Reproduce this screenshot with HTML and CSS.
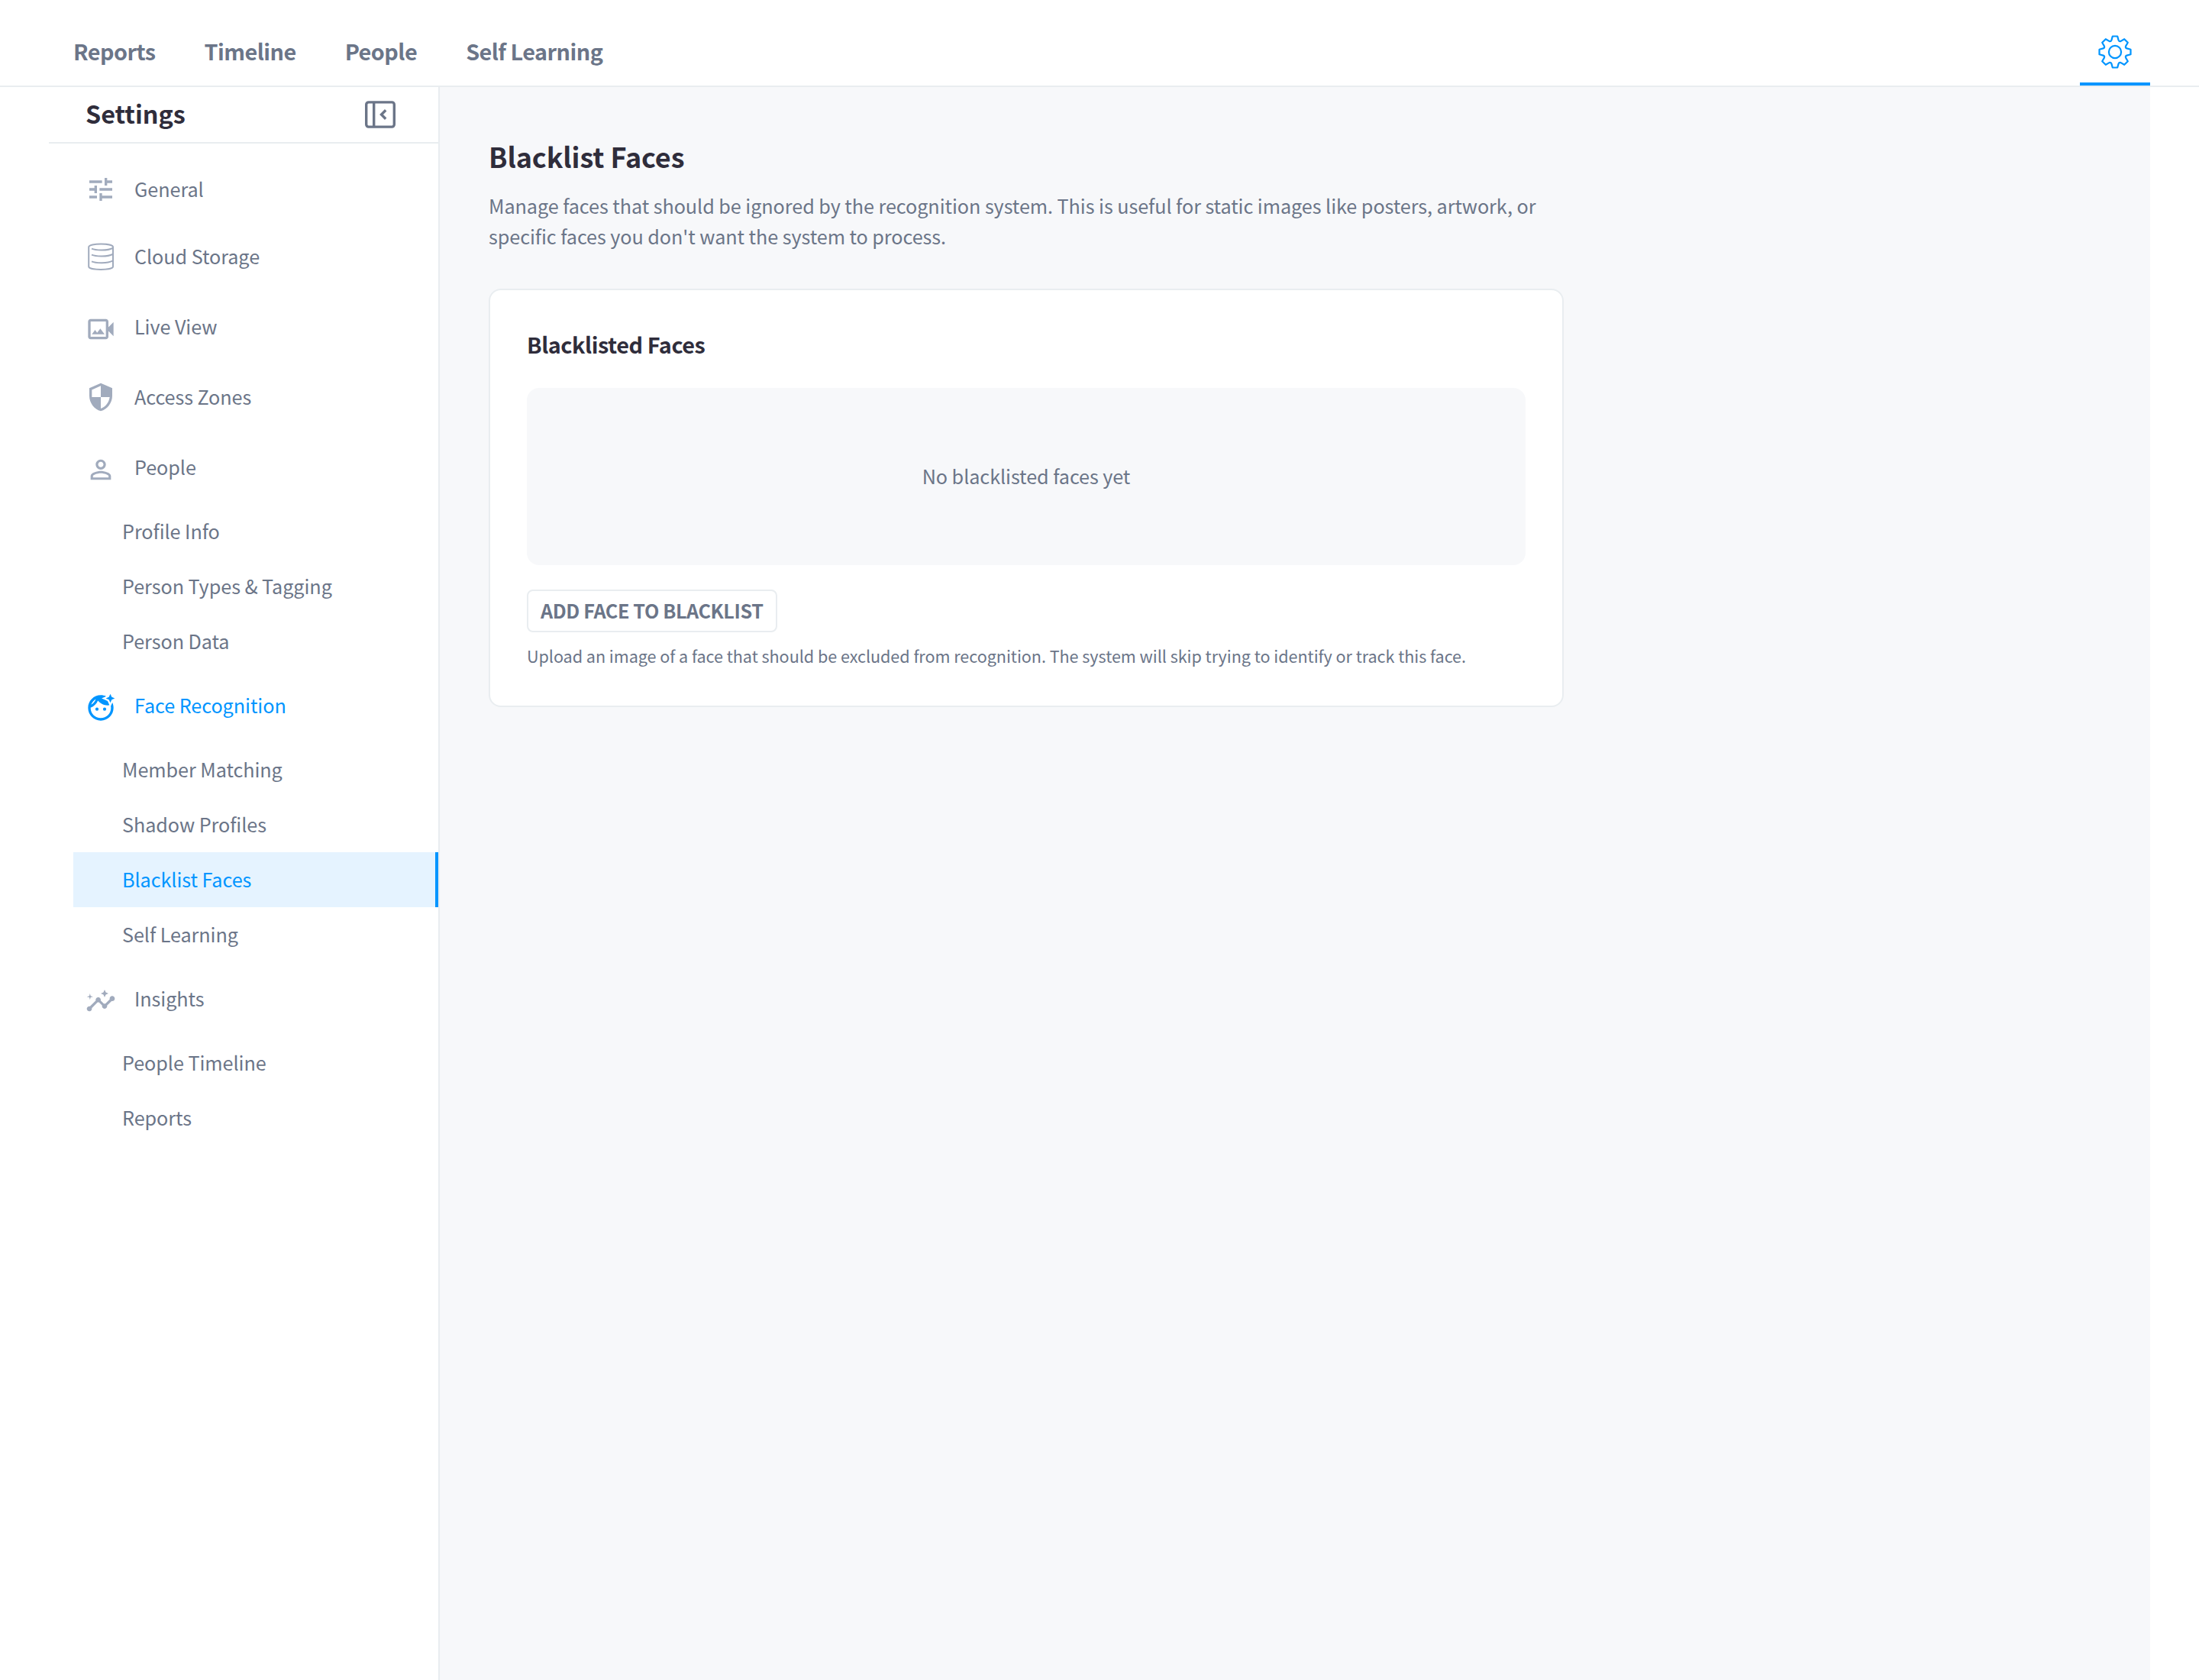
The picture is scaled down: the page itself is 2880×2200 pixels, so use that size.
FILE: index.html
```html
<!DOCTYPE html>
<html lang="en">
<head>
    <meta charset="UTF-8">
    <meta name="viewport" content="width=device-width, initial-scale=1.0">
    <title>Blacklist Faces</title>
    <link rel="stylesheet" href="styles.css">
</head>
<body>
    <header class="topbar">
        <nav class="topnav">
            <a href="#">Reports</a>
            <a href="#">Timeline</a>
            <a href="#">People</a>
            <a href="#">Self Learning</a>
        </nav>
        <a href="#" class="gear on">
            <svg width="48" height="48" viewBox="0 0 48 48" fill="none" stroke="currentColor" stroke-width="2.2" stroke-linejoin="round">
                <circle cx="24" cy="24" r="8.1"/>
                <path d="M20.8 3.5H27.2L28.6 8.600Q29.500 10.700 31.600 9.900L36.200 7.200 40.800 11.800 38.100 16.400Q37.300 18.500 39.400 19.400L44.500 20.800V27.200L39.400 28.600Q37.300 29.500 38.100 31.600L40.800 36.200 36.200 40.800 31.600 38.100Q29.500 37.300 28.600 39.400L27.200 44.500H20.800L19.400 39.400Q18.500 37.300 16.400 38.100L11.800 40.800 7.200 36.200 9.900 31.600Q10.700 29.500 8.600 28.600L3.500 27.200V20.800L8.600 19.400Q10.700 18.500 9.900 16.400L7.200 11.800 11.800 7.200 16.400 9.900Q18.500 10.700 19.400 8.600Z"/>
            </svg>
        </a>
    </header>
    <div class="layout">
        <aside class="sidebar">
            <div class="side-head">
                <h2>Settings</h2>
                <svg class="collapse" width="40" height="36" viewBox="0 0 40 36" fill="none" stroke="currentColor" stroke-width="3.4">
                    <rect x="1.7" y="1.9" width="36.6" height="32.2" rx="3"/>
                    <path d="M11.7 2v32M27.200 12.200l-5.700 5.800 5.700 5.800"/>
                </svg>
            </div>
            <ul class="menu">
                <li class="item general"><a href="#">
                    <svg class="icon" viewBox="0 0 24 24"><path d="M3 17v2h6v-2H3zM3 5v2h10V5H3zm10 16v-2h8v-2h-8v-2h-2v6h2zM7 9v2H3v2h4v2h2V9H7zm14 4v-2H11v2h10zm-6-4h2V7h4V5h-4V3h-2v6z"/></svg>
                    <span>General</span></a></li>
                <li class="item cloud"><a href="#">
                    <svg class="icon line" viewBox="0 0 40 40"><path d="M4.200 7.500C4.200 2.200 36 2.200 36 7.500V33c0 5.200-31.800 5.200-31.800 0z"/><path d="M8 9.700c6 2.600 21 2.600 27.500-.7M8 17.700c6 2.600 21 2.600 27.500-.7M8 26.300c6 2.600 21 2.600 27.500-.7"/></svg>
                    <span>Cloud Storage</span></a></li>
                <li class="item"><a href="#">
                    <svg class="icon low" viewBox="0 0 24 24"><path d="M18 10.480V6c0-1.100-.9-2-2-2H4c-1.100 0-2 .9-2 2v12c0 1.100.9 2 2 2h12c1.100 0 2-.9 2-2v-4.480l4 3.980v-11l-4 3.980zM16 18H4V6h12v12zM11.620 11.500l-2.500 3.330L7.500 12.670 5 16h10z"/></svg>
                    <span>Live View</span></a></li>
                <li class="item"><a href="#">
                    <svg class="icon" viewBox="0 0 24 24"><path d="M12 1L3 5v6c0 5.550 3.840 10.740 9 12 5.160-1.260 9-6.450 9-12V5l-9-4zm0 10.990h7c-.53 4.120-3.280 7.790-7 8.940V12H5V6.300l7-3.110v8.800z"/></svg>
                    <span>Access Zones</span></a></li>
                <li class="item"><a href="#">
                    <svg class="icon low" viewBox="0 0 24 24"><path d="M12 5.900c1.160 0 2.100.94 2.100 2.100s-.94 2.100-2.100 2.100S9.900 9.160 9.900 8s.94-2.100 2.100-2.100m0 9c2.970 0 6.100 1.460 6.100 2.100v1.100H5.900V17c0-.64 3.130-2.100 6.100-2.100M12 4C9.790 4 8 5.790 8 8s1.790 4 4 4 4-1.790 4-4-1.790-4-4-4zm0 9c-2.670 0-8 1.340-8 4v3h16v-3c0-2.660-5.330-4-8-4z"/></svg>
                    <span>People</span></a></li>
                <li class="sub"><a href="#">Profile Info</a></li>
                <li class="sub"><a href="#">Person Types &amp; Tagging</a></li>
                <li class="sub"><a href="#">Person Data</a></li>
                <li class="item group on"><a href="#">
                    <svg class="icon low" viewBox="0 0 24 24"><circle cx="9" cy="13" r="1.250"/><circle cx="15" cy="13" r="1.250"/><path d="M20.770 8.580l-.92 2.010c.09.46.15.93.15 1.410 0 4.410-3.590 8-8 8s-8-3.590-8-8c0-.05.01-.1 0-.14 2.600-.98 4.690-2.990 5.740-5.550C11.580 8.560 14.370 10 17.500 10c.45 0 .89-.04 1.330-.1l-.6-1.320-.88-1.930-1.930-.88-2.790-1.270 2.790-1.270.71-.32C14.870 2.330 13.470 2 12 2 6.480 2 2 6.480 2 12s4.480 10 10 10 10-4.480 10-10c0-1.470-.33-2.870-.9-4.130l-.33.71zM4.420 9.470C5.050 7.580 6.370 6 8.080 5.030 7.450 6.920 6.130 8.500 4.420 9.470z"/><path d="M20.600 5.600L19.500 8l-1.100-2.400L16 4.500l2.400-1.100L19.500 1l1.100 2.400L23 4.500z"/></svg>
                    <span>Face Recognition</span></a></li>
                <li class="sub"><a href="#">Member Matching</a></li>
                <li class="sub"><a href="#">Shadow Profiles</a></li>
                <li class="sub on"><a href="#">Blacklist Faces</a></li>
                <li class="sub"><a href="#">Self Learning</a></li>
                <li class="item group"><a href="#">
                    <svg class="icon low" viewBox="0 0 24 24"><path d="M21 8c-1.450 0-2.260 1.440-1.930 2.510l-3.550 3.560c-.3-.09-.74-.09-1.040 0l-2.550-2.550C12.270 10.450 11.460 9 10 9c-1.450 0-2.270 1.440-1.930 2.520l-4.560 4.550C2.440 15.740 1 16.550 1 18c0 1.100.9 2 2 2 1.450 0 2.260-1.440 1.930-2.510l4.550-4.560c.3.09.74.09 1.040 0l2.550 2.550C12.730 16.550 13.540 18 15 18c1.450 0 2.270-1.440 1.930-2.520l3.560-3.550c1.070.33 2.510-.48 2.510-1.930 0-1.100-.9-2-2-2z"/><path d="M15 9l.94-2.070L18 6l-2.060-.93L15 3l-.92 2.070L12 6l2.080.93zM3.500 11L4 9l2-.5L4 8l-.5-2L3 8l-2 .5L3 9z"/></svg>
                    <span>Insights</span></a></li>
                <li class="sub"><a href="#">People Timeline</a></li>
                <li class="sub"><a href="#">Reports</a></li>
            </ul>
        </aside>
        <main class="content">
            <h1>Blacklist Faces</h1>
            <p class="desc">Manage faces that should be ignored by the recognition system. This is useful for static images like posters, artwork, or specific faces you don't want the system to process.</p>
            <section class="card">
                <h3>Blacklisted Faces</h3>
                <div class="empty">No blacklisted faces yet</div>
                <button type="button" class="btn">ADD FACE TO BLACKLIST</button>
                <p class="hint">Upload an image of a face that should be excluded from recognition. The system will skip trying to identify or track this face.</p>
            </section>
        </main>
    </div>
</body>
</html>
```
FILE: styles.css
```css
* {
    padding: 0;
    margin: 0;
    box-sizing: border-box;
}
body {
    font-family: "Noto Sans CJK SC", sans-serif;
    font-size: 25.2px;
    letter-spacing: -0.06px;
    color: #6b7588;
    background-color: #fff;
}
a {
    color: inherit;
    text-decoration: none;
}
ul {
    list-style: none;
}
svg {
    display: block;
}
.topbar {
    display: flex;
    justify-content: space-between;
    height: 114px;
    padding: 0 64px 0 96px;
    border-bottom: 2px solid #e9edf0;
}
.topnav {
    display: flex;
    gap: 64px;
    padding-top: 47px;
    font-size: 28.8px;
    font-weight: 600;
    line-height: 40px;
    letter-spacing: -0.52px;
}
.gear {
    display: flex;
    justify-content: center;
    width: 92px;
    height: 112px;
    padding-top: 44px;
}
.gear.on {
    color: #0095ff;
    border-bottom: 4px solid #0095ff;
}
.layout {
    display: flex;
    height: 2086px;
    padding: 0 64px;
}
.sidebar {
    flex: none;
    width: 512px;
    border-right: 2px solid #e9edf0;
}
.side-head {
    display: flex;
    justify-content: space-between;
    align-items: center;
    height: 74px;
    padding: 0 56px 0 48px;
    border-bottom: 2px solid #e9edf0;
}
.side-head h2 {
    margin-bottom: 4px;
    font-size: 32.4px;
    line-height: 40px;
    color: #2f2d3b;
}
.menu {
    padding: 20px 0 0 32px;
}
.item {
    height: 92px;
    padding: 24px 0 0 16px;
}
.item.general,
.item.cloud {
    height: 88px;
    padding-top: 20px;
}
.item.group {
    height: 96px;
    padding-top: 28px;
}
.item a {
    display: flex;
    align-items: center;
    gap: 24px;
    height: 40px;
}
.item span {
    padding-bottom: 2px;
}
.icon {
    width: 40px;
    height: 40px;
    fill: #a1abbd;
}
.icon.low {
    margin-top: 6px;
}
.icon.line {
    fill: none;
    stroke: #a1abbd;
    stroke-width: 2;
}
.item.on {
    color: #0095ff;
}
.item.on .icon {
    fill: #0095ff;
}
.sub {
    height: 72px;
    padding-left: 64px;
    line-height: 70px;
}
.sub.on {
    color: #0095ff;
    background-color: #e5f3ff;
    border-right: 4px solid #0095ff;
}
.content {
    flex: 1;
    padding: 62px 64px;
    background-color: #f7f8fa;
}
.content h1 {
    font-size: 36px;
    line-height: 56px;
    letter-spacing: -0.1px;
    color: #2f2d3b;
}
.desc {
    width: 1408px;
    margin-top: 17px;
    line-height: 40px;
}
.card {
    width: 1408px;
    height: 548px;
    margin-top: 49px;
    padding: 47px 48px 48px;
    background-color: #fff;
    border: 2px solid #e9edf0;
    border-radius: 16px;
}
.card h3 {
    font-size: 28.8px;
    line-height: 48px;
    letter-spacing: -0.45px;
    color: #2f2d3b;
    font-weight: 600;
}
.empty {
    display: flex;
    justify-content: center;
    align-items: center;
    height: 232px;
    margin-top: 33px;
    padding-bottom: 2px;
    background-color: #f7f8fa;
    border-radius: 16px;
}
.btn {
    display: block;
    height: 56px;
    margin-top: 32px;
    padding: 0 17px 2px 16px;
    font: 600 25.2px "Noto Sans CJK SC", sans-serif;
    letter-spacing: -0.41px;
    color: #6b7588;
    background-color: #fff;
    border: 2px solid #e9edf0;
    border-radius: 8px;
}
.hint {
    margin-top: 15px;
    font-size: 21.6px;
    line-height: 32px;
    letter-spacing: -0.052px;
}
```
